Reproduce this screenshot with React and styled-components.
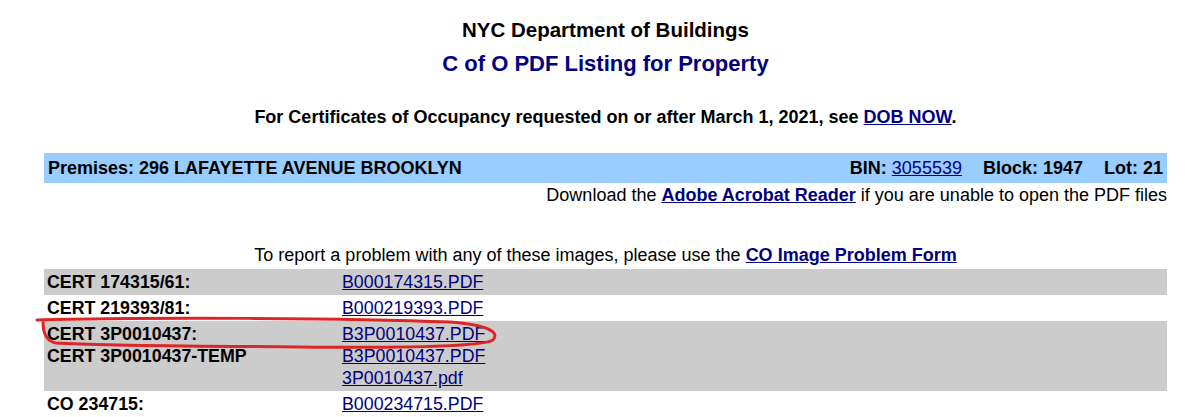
import React from "react";
import styled, { createGlobalStyle } from "styled-components";

const NAVY = "#000080";
const BAR_BLUE = "#99ccff";
const ROW_GRAY = "#cccccc";

const GlobalStyle = createGlobalStyle`
  html, body {
    margin: 0;
    padding: 0;
    background: #ffffff;
  }
  body {
    font-family: "Liberation Sans", Arial, Helvetica, sans-serif;
    font-size: 17.8px;
    color: #000000;
  }
`;

const Page = styled.div`
  position: relative;
  width: 1123px;
  padding: 0 23px 0 44px;
  height: 417px;
  overflow: hidden;
`;

const Title = styled.div`
  margin-top: 18px;
  text-align: center;
  font-weight: bold;
  font-size: 20.5px;
  line-height: 24px;
`;

const Subtitle = styled.div`
  margin-top: 9px;
  text-align: center;
  font-weight: bold;
  font-size: 22px;
  line-height: 26px;
  color: ${NAVY};
`;

const Notice = styled.div`
  margin-top: 30px;
  text-align: center;
  font-weight: bold;
  font-size: 18px;
  line-height: 20px;
`;

const Link = styled.a`
  color: ${NAVY};
  text-decoration: underline;
  font-weight: ${(p) => (p.$bold ? "bold" : "normal")};
  cursor: pointer;
`;

const PremisesBar = styled.div`
  margin-top: 26px;
  height: 30px;
  background: ${BAR_BLUE};
  display: flex;
  align-items: center;
  justify-content: space-between;
  padding: 0 4px;
  font-weight: bold;
  font-size: 18px;
`;

const PropertyIds = styled.div`
  display: flex;
  gap: 21px;
`;

const DownloadNote = styled.div`
  margin-top: 2px;
  text-align: right;
  font-size: 18px;
  line-height: 20px;
`;

const ReportNote = styled.div`
  margin-top: 40px;
  text-align: center;
  font-size: 18px;
  line-height: 20px;
`;

const Listing = styled.div`
  margin-top: 4px;
`;

const Row = styled.div`
  background: ${(p) => (p.$shaded ? ROW_GRAY : "transparent")};
  padding: 2px 0;
`;

const Entry = styled.div`
  display: grid;
  grid-template-columns: 298px 1fr;
  line-height: 22px;
`;

const Label = styled.div`
  padding-left: 3px;
  font-weight: bold;
`;

const Files = styled.div`
  display: flex;
  flex-direction: column;
  align-items: flex-start;
`;

const Annotation = styled.svg`
  position: absolute;
  left: 0;
  top: 0;
  pointer-events: none;
`;

const rows = [
  { shaded: true, entries: [{ label: "CERT 174315/61:", files: ["B000174315.PDF"] }] },
  { shaded: false, entries: [{ label: "CERT 219393/81:", files: ["B000219393.PDF"] }] },
  {
    shaded: true,
    entries: [
      { label: "CERT 3P0010437:", files: ["B3P0010437.PDF"] },
      { label: "CERT 3P0010437-TEMP", files: ["B3P0010437.PDF", "3P0010437.pdf"] },
    ],
  },
  { shaded: false, entries: [{ label: "CO 234715:", files: ["B000234715.PDF"] }] },
];

export default function App() {
  return (
    <>
      <GlobalStyle />
      <Page>
        <Title>NYC Department of Buildings</Title>
        <Subtitle>C of O PDF Listing for Property</Subtitle>
        <Notice>
          For Certificates of Occupancy requested on or after March 1, 2021, see{" "}
          <Link $bold>DOB NOW</Link>.
        </Notice>

        <PremisesBar>
          <span>Premises: 296 LAFAYETTE AVENUE BROOKLYN</span>
          <PropertyIds>
            <span>
              BIN: <Link>3055539</Link>
            </span>
            <span>Block: 1947</span>
            <span>Lot: 21</span>
          </PropertyIds>
        </PremisesBar>

        <DownloadNote>
          Download the <Link $bold>Adobe Acrobat Reader</Link> if you are unable to open the PDF files
        </DownloadNote>

        <ReportNote>
          To report a problem with any of these images, please use the{" "}
          <Link $bold>CO Image Problem Form</Link>
        </ReportNote>

        <Listing>
          {rows.map((row, i) => (
            <Row key={i} $shaded={row.shaded}>
              {row.entries.map((e) => (
                <Entry key={e.label}>
                  <Label>{e.label}</Label>
                  <Files>
                    {e.files.map((f, j) => (
                      <Link key={j}>{f}</Link>
                    ))}
                  </Files>
                </Entry>
              ))}
            </Row>
          ))}
        </Listing>

        <Annotation width="1190" height="417" viewBox="0 0 1190 417">
          <path
            d="M 37 320 C 150 317, 350 318, 450 322 C 488 325, 500 332, 493 340 C 482 347, 400 348, 300 347 C 200 346, 100 346, 56 343 C 46 341, 43 332, 43 322"
            fill="none"
            stroke="#dc2626"
            strokeWidth="3"
            strokeLinecap="round"
          />
        </Annotation>
      </Page>
    </>
  );
}
